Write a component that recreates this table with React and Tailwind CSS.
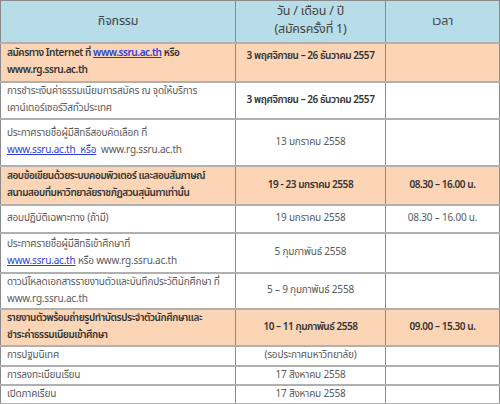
import React from "react";

const font = { fontFamily: '"Noto Sans Thai", Tahoma, "Noto Sans", "DejaVu Sans", sans-serif' };

function Link({ children }) {
  return <span className="text-[#2b3fd6] underline">{children}</span>;
}

const rows = [
  {
    h: "h-[39px]",
    hl: true,
    a: (
      <>
        สมัครทาง Internet ที่ <Link>www.ssru.ac.th</Link> หรือ
        <br />
        www.rg.ssru.ac.th
      </>
    ),
    b: "3 พฤศจิกายน – 26 ธันวาคม 2557",
    bTop: true,
  },
  {
    h: "h-[37px]",
    a: (
      <>
        การชำระเงินค่าธรรมเนียมการสมัคร ณ จุดให้บริการ
        <br />
        เคาน์เตอร์เซอร์วิสทั่วประเทศ
      </>
    ),
    b: "3 พฤศจิกายน – 26 ธันวาคม 2557",
    bBold: true,
  },
  {
    h: "h-[47px]",
    a: (
      <>
        ประกาศรายชื่อผู้มีสิทธิ์สอบคัดเลือก ที่
        <br />
        <Link>www.ssru.ac.th&nbsp;&nbsp;หรือ</Link>&nbsp;&nbsp;www.rg.ssru.ac.th
      </>
    ),
    b: "13 มกราคม 2558",
  },
  {
    h: "h-[39px]",
    hl: true,
    a: (
      <>
        สอบข้อเขียนด้วยระบบคอมพิวเตอร์ และสอบสัมภาษณ์
        <br />
        สนามสอบที่มหาวิทยาลัยราชภัฏสวนสุนันทาเท่านั้น
      </>
    ),
    b: "19 - 23 มกราคม 2558",
    c: "08.30 – 16.00 น.",
  },
  {
    h: "h-[28px]",
    a: "สอบปฏิบัติเฉพาะทาง (ถ้ามี)",
    b: "19 มกราคม 2558",
    c: "08.30 – 16.00 น.",
  },
  {
    h: "h-[40px]",
    a: (
      <>
        ประกาศรายชื่อผู้มีสิทธิเข้าศึกษาที่
        <br />
        <Link>www.ssru.ac.th</Link> หรือ www.rg.ssru.ac.th
      </>
    ),
    b: "5 กุมภาพันธ์ 2558",
  },
  {
    h: "h-[36px]",
    a: (
      <>
        ดาวน์โหลดเอกสารรายงานตัวและบันทึกประวัตินักศึกษา ที่
        <br />
        www.rg.ssru.ac.th
      </>
    ),
    b: "5 – 9 กุมภาพันธ์ 2558",
  },
  {
    h: "h-[37px]",
    hl: true,
    a: (
      <>
        รายงานตัวพร้อมถ่ายรูปทำบัตรประจำตัวนักศึกษาและ
        <br />
        ชำระค่าธรรมเนียมเข้าศึกษา
      </>
    ),
    b: "10 – 11 กุมภาพันธ์ 2558",
    c: "09.00 – 15.30 น.",
  },
  { h: "h-[20px]", a: "การปฐมนิเทศ", b: "(รอประกาศมหาวิทยาลัย)" },
  { h: "h-[18px]", a: "การลงทะเบียนเรียน", b: "17 สิงหาคม 2558" },
  { h: "h-[19px]", a: "เปิดภาคเรียน", b: "17 สิงหาคม 2558" },
];

export default function App() {
  return (
    <div className="w-[500px] h-[404px] bg-white overflow-hidden" style={font}>
      <table className="w-[499px] border-collapse table-fixed text-[10px] leading-[17px] text-[#5a5a5a] whitespace-nowrap [font-stretch:semi-condensed] tracking-[-0.2px]">
        <colgroup>
          <col className="w-[235px]" />
          <col className="w-[150px]" />
          <col className="w-[114px]" />
        </colgroup>
        <thead>
          <tr className="h-[42px] bg-[#b7dde8] text-[12.5px] text-[#444]">
            <th className="border border-[#8a8a8a] font-normal p-0">กิจกรรม</th>
            <th className="border border-[#8a8a8a] font-normal leading-[18px] p-0">
              วัน / เดือน / ปี
              <br />
              (สมัครครั้งที่ 1)
            </th>
            <th className="border border-[#8a8a8a] font-normal p-0">เวลา</th>
          </tr>
        </thead>
        <tbody>
          {rows.map((r, i) => (
            <tr
              key={i}
              className={`${r.h} ${r.hl ? "bg-[#fbd5b5] font-semibold text-[#333] tracking-[-0.45px]" : ""}`}
            >
              <td className="border-x border-x-[#8a8a8a] border-y-2 border-y-[#b0b0b0] px-[6px] py-0 align-middle overflow-hidden">
                {r.a}
              </td>
              <td
                className={`border-x border-x-[#8a8a8a] border-y-2 border-y-[#b0b0b0] px-1 py-0 text-center ${
                  r.bTop ? "align-top pt-[4px]" : "align-middle"
                } ${r.bBold ? "font-semibold text-[#333] tracking-[-0.45px]" : ""}`}
              >
                {r.b}
              </td>
              <td className="border-x border-x-[#8a8a8a] border-y-2 border-y-[#b0b0b0] px-1 py-0 text-center align-middle">
                {r.c || ""}
              </td>
            </tr>
          ))}
        </tbody>
      </table>
    </div>
  );
}
